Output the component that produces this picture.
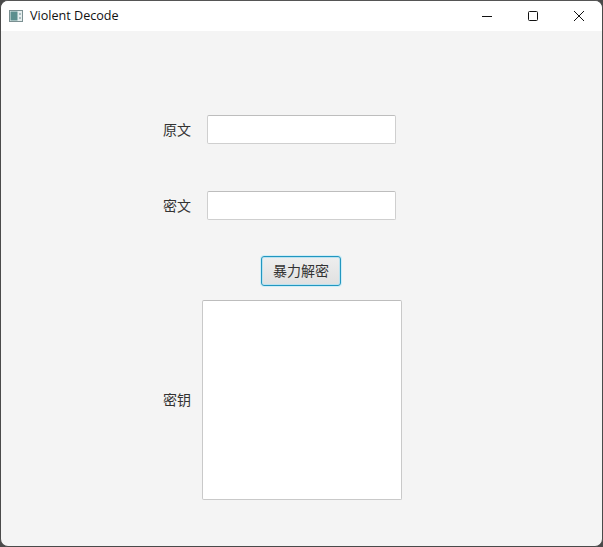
<div class="window">
  <header class="titlebar">
    <svg class="app-icon" width="14" height="12" viewBox="0 0 14 12">
      <rect x="0.5" y="0.5" width="13" height="11" fill="#e6eeee" stroke="#7b9092" />
      <rect x="1.5" y="1.5" width="7" height="9" fill="#5c8f8e" />
      <rect x="10" y="3" width="2" height="2" fill="#a9bcc0" />
      <rect x="10" y="7" width="2" height="2" fill="#a9bcc0" />
    </svg>
    <span class="title">Violent Decode</span>
    <div class="controls">
      <button class="ctrl" aria-label="Minimize">
        <svg width="12" height="12" viewBox="0 0 12 12"><path d="M1 6.5h10" stroke="#111" fill="none" /></svg>
      </button>
      <button class="ctrl" aria-label="Maximize">
        <svg width="12" height="12" viewBox="0 0 12 12"><rect x="1.5" y="1.5" width="9" height="9" rx="1" stroke="#111" fill="none" /></svg>
      </button>
      <button class="ctrl" aria-label="Close">
        <svg width="12" height="12" viewBox="0 0 12 12"><path d="M1 1l10 10M11 1L1 11" stroke="#111" fill="none" /></svg>
      </button>
    </div>
  </header>

  <main class="content">
    <div class="row">
      <label class="label" for="plain">原文</label>
      <input id="plain" class="input" type="text" />
    </div>
    <div class="row second">
      <label class="label" for="cipher">密文</label>
      <input id="cipher" class="input" type="text" />
    </div>
    <button class="action">暴力解密</button>
    <div class="row key-row">
      <label class="label key-label" for="key">密钥</label>
      <textarea id="key" class="output"></textarea>
    </div>
  </main>
</div>

<style>
  :global(body) {
    margin: 0;
    background: #4a4a4a;
  }
  .window {
    box-sizing: border-box;
    width: 603px;
    height: 547px;
    display: flex;
    flex-direction: column;
    overflow: hidden;
    border: 1px solid #4a4a4a;
    border-top-color: #555;
    border-radius: 8px;
    background: #f4f4f4;
    font-family: "Noto Sans CJK SC", "Open Sans", sans-serif;
    color: #333;
  }
  .titlebar {
    height: 30px;
    flex: none;
    display: flex;
    align-items: center;
    background: #fff;
    padding-left: 8px;
  }
  .app-icon {
    flex: none;
    margin-bottom: 1px;
  }
  .title {
    margin-left: 7px;
    margin-bottom: 2px;
    font-family: "Open Sans", sans-serif;
    font-size: 12.6px;
    color: #111;
  }
  .controls {
    margin-left: auto;
    display: flex;
  }
  .ctrl {
    width: 46px;
    height: 30px;
    padding: 0 0 1px;
    border: 0;
    background: transparent;
    display: flex;
    align-items: center;
    justify-content: center;
  }
  .content {
    flex: 1;
    display: flex;
    flex-direction: column;
    align-items: flex-start;
    padding: 84px 0 0 162px;
  }
  .row {
    display: flex;
    align-items: center;
  }
  .second {
    margin-top: 47px;
  }
  .label {
    width: 44px;
    flex: none;
    margin-bottom: 2px;
    font-size: 14px;
    line-height: 20px;
    color: #333;
  }
  .input {
    box-sizing: border-box;
    width: 189px;
    height: 29px;
    padding: 0 6px;
    background: #fff;
    border: 1px solid #cfcfcf;
    border-top-color: #bdbdbd;
    border-radius: 2px;
    outline: none;
  }
  .action {
    box-sizing: border-box;
    width: 80px;
    height: 30px;
    margin: 36px 0 0 98px;
    padding: 0 0 3px;
    border: 1px solid #2296bf;
    border-radius: 3px;
    box-shadow: 0 0 0 1px #cfeef8, inset 0 0 0 1px #b9e2f0;
    background: linear-gradient(#eeeeee, #e0e0e0);
    font-family: inherit;
    font-size: 14px;
    color: #333;
  }
  .key-row {
    margin-top: 14px;
  }
  .key-label {
    width: 39px;
  }
  .output {
    box-sizing: border-box;
    display: block;
    width: 200px;
    height: 200px;
    padding: 6px;
    background: #fff;
    border: 1px solid #c9c9c9;
    border-top-color: #bdbdbd;
    border-radius: 2px;
    outline: none;
    resize: none;
  }
</style>
